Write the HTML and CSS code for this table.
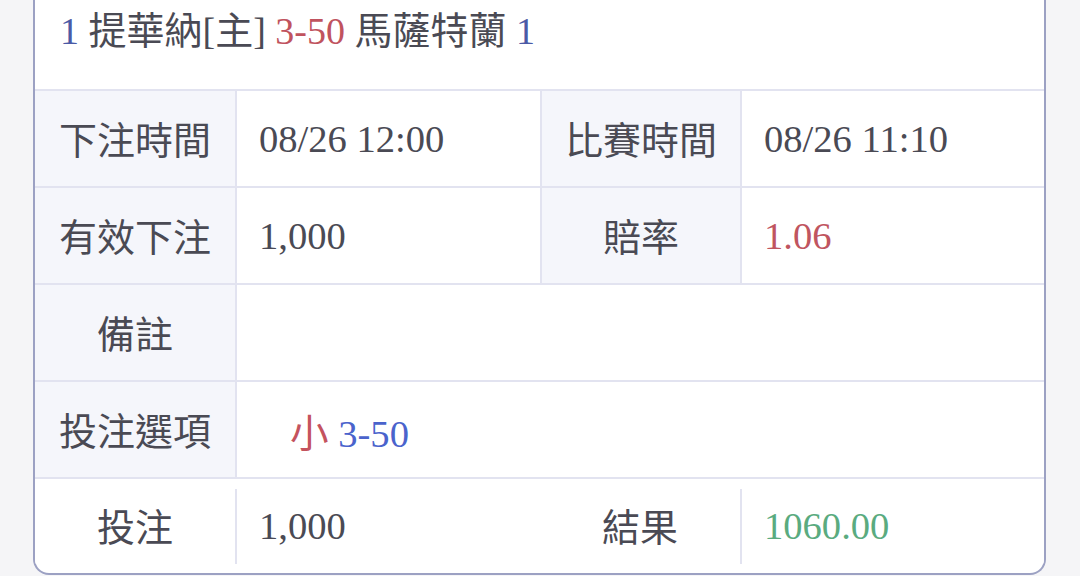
FILE: index.html
```html
<!DOCTYPE html>
<html lang="zh-Hant">
<head>
<meta charset="utf-8">
<title>注單詳情</title>
<link rel="stylesheet" href="styles.css">
</head>
<body>
<div class="card">
  <div class="match">
    <span class="num">1</span> 提華納[主] <span class="score">3-50</span> 馬薩特蘭 <span class="num">1</span>
  </div>
  <div class="grid">
    <div class="label">下注時間</div>
    <div class="value">08/26 12:00</div>
    <div class="label">比賽時間</div>
    <div class="value">08/26 11:10</div>

    <div class="label">有效下注</div>
    <div class="value">1,000</div>
    <div class="label">賠率</div>
    <div class="value odds">1.06</div>

    <div class="label">備註</div>
    <div class="value wide"></div>

    <div class="label">投注選項</div>
    <div class="value wide"><span class="pick"><span class="side">小</span> <span class="line">3-50</span></span></div>
  </div>
  <div class="foot">
    <div class="label">投注</div>
    <div class="value">1,000</div>
    <div class="label">結果</div>
    <div class="value win">1060.00</div>
  </div>
</div>
</body>
</html>
```
FILE: styles.css
```css
html, body {
  margin: 0;
  padding: 0;
}
body {
  background: #f5f5f7;
  padding: 0 34px 1px 33px;
  height: 575px;
  overflow: hidden;
  font-family: "Liberation Serif", "Noto Sans CJK TC", serif;
  color: #4a4a54;
}
.card {
  width: 1013px;
  box-sizing: border-box;
  height: 575px;
  background: #fff;
  border: 2px solid #9ca1c3;
  border-top: none;
  border-radius: 0 0 16px 16px;
  overflow: hidden;
  display: flex;
  flex-direction: column;
}
.match {
  height: 89px;
  box-sizing: border-box;
  padding: 7px 0 0 25px;
  font-size: 38px;
  line-height: 48px;
  white-space: nowrap;
}
.num { color: #4b5aa6; }
.score { color: #c0535e; }
.grid {
  display: grid;
  grid-template-columns: 200px 303px 198px 302px;
  grid-auto-rows: 95px;
  gap: 2px;
  background: #e2e3f0;
  padding: 2px 0;
}
.label {
  background: #f5f6fb;
  display: flex;
  align-items: center;
  justify-content: center;
  font-size: 38px;
  padding-bottom: 3px;
}
.value {
  background: #fff;
  display: flex;
  align-items: center;
  padding-left: 22px;
  font-size: 38.6px;
}
.wide { grid-column: 2 / 5; }
.odds { color: #c0555f; }
.pick { margin-left: 31px; }
.side { color: #c4535e; }
.line { color: #4a63cc; }
.foot {
  display: grid;
  grid-template-columns: 200px 305px 200px 304px;
  height: 94px;
  align-items: center;
}
.foot .label { background: #fff; height: 75px; box-sizing: border-box; }
.foot .value {
  height: 75px;
  box-sizing: border-box;
  border-left: 2px solid #e2e3f0;
}
.win { color: #5aab7f; }
```
